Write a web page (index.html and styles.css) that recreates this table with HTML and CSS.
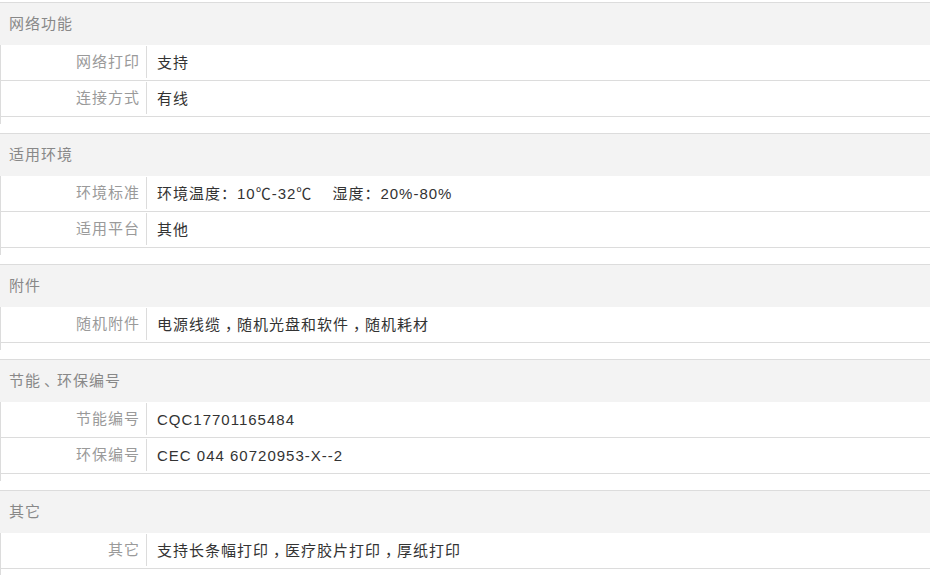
FILE: index.html
```html
<!DOCTYPE html>
<html lang="zh-CN">
<head>
<meta charset="utf-8">
<title>参数</title>
<link rel="stylesheet" href="styles.css">
</head>
<body>
<div class="spec">
  <section class="group">
    <div class="group-title">网络功能</div>
    <div class="row"><div class="label">网络打印</div><div class="value">支持</div></div>
    <div class="row"><div class="label">连接方式</div><div class="value">有线</div></div>
  </section>
  <section class="group">
    <div class="group-title">适用环境</div>
    <div class="row"><div class="label">环境标准</div><div class="value">环境温度：10℃-32℃<span class="gap"></span>湿度：20%-80%</div></div>
    <div class="row"><div class="label">适用平台</div><div class="value">其他</div></div>
  </section>
  <section class="group">
    <div class="group-title">附件</div>
    <div class="row"><div class="label">随机附件</div><div class="value">电源线缆<span class="comma">，</span>随机光盘和软件<span class="comma">，</span>随机耗材</div></div>
  </section>
  <section class="group">
    <div class="group-title">节能<span class="dun">、</span>环保编号</div>
    <div class="row"><div class="label">节能编号</div><div class="value">CQC17701165484</div></div>
    <div class="row"><div class="label">环保编号</div><div class="value">CEC 044 60720953-X--2</div></div>
  </section>
  <section class="group">
    <div class="group-title">其它</div>
    <div class="row"><div class="label">其它</div><div class="value">支持长条幅打印<span class="comma">，</span>医疗胶片打印<span class="comma">，</span>厚纸打印</div></div>
  </section>
</div>
</body>
</html>
```
FILE: styles.css
```css
html, body {
  margin: 0;
  padding: 0;
  background: #fff;
}
body {
  font-family: "Liberation Sans", "Noto Sans CJK SC", sans-serif;
  font-size: 15px;
  letter-spacing: 1px;
  color: #333;
}
.spec {
  padding-top: 2px;
}
.group {
  border-top: 1px solid #dcdcdc;
  border-left: 1px solid #dcdcdc;
  padding-bottom: 7px;
  margin-bottom: 9px;
}
.group-title {
  height: 42px;
  line-height: 42px;
  background: #f3f3f3;
  color: #888;
  padding-left: 9px;
  margin-left: -1px;
}
.row {
  display: flex;
  height: 35px;
  border-bottom: 1px solid #dcdcdc;
}
.label {
  width: 139px;
  padding-right: 6px;
  text-align: right;
  color: #9a9a9a;
  border-right: 1px solid #dcdcdc;
  margin: 1px 0 2px;
  line-height: 32px;
  flex: none;
}
.value {
  padding-left: 10px;
  line-height: 35px;
  color: #333;
  white-space: nowrap;
}
.comma,
.dun {
  display: inline-block;
  width: 16px;
  box-sizing: border-box;
  white-space: nowrap;
}
.comma {
  padding-left: 4px;
  letter-spacing: -4px;
}
.dun {
  padding-left: 3px;
  letter-spacing: -3px;
}
.gap {
  display: inline-block;
  width: 20px;
}
```
